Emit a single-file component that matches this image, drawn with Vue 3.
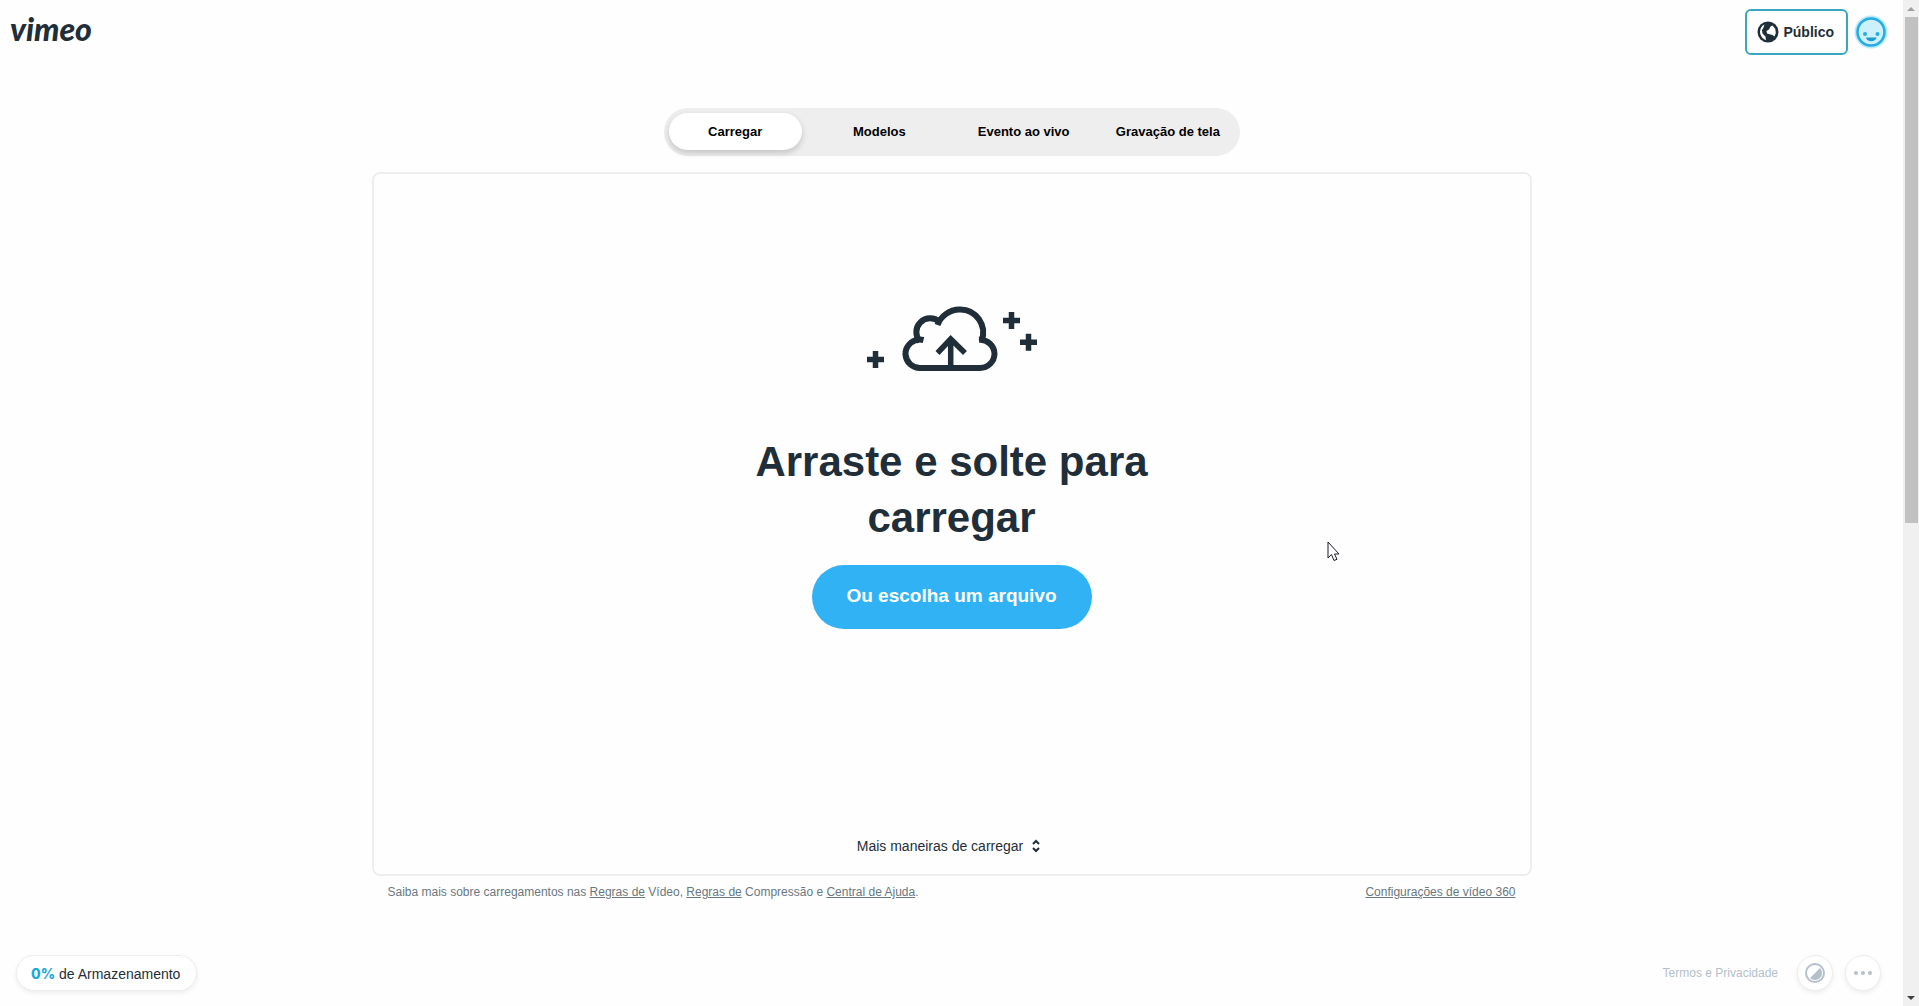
<template>
  <div class="window">
    <div class="page">
      <header class="header">
        <a href="#" class="logo">vimeo</a>
        <div class="header-actions">
          <button class="btn-privacy">
            <svg class="icon-globe" viewBox="0 0 22 22" aria-hidden="true">
              <circle cx="11" cy="11" r="10.500" fill="#1f2e38" />
              <path d="M7.500 3.500C1.500 6.500 1.500 15 7.500 18.500L9 19 8.500 15.500 5.500 12.500 5 9 6.500 6.500Z" fill="#fff" />
              <path d="M15.500 4.500 18.300 8 18.800 12 17.500 15.500 15.500 14 13.500 13.500 10 12.500 9.500 10 12 8.500 13.500 5.500Z" fill="#fff" />
            </svg>
            <span>Público</span>
          </button>
          <button class="btn-avatar" aria-label="Perfil">
            <svg viewBox="0 0 34 34" aria-hidden="true">
              <circle cx="17" cy="17" r="16.500" fill="#b5ebfb" />
              <circle cx="17" cy="17" r="13.500" fill="#cdf1fc" stroke="#27aae1" stroke-width="2.500" />
              <circle cx="11" cy="19" r="2" fill="#27aae1" />
              <circle cx="23.500" cy="19" r="2" fill="#27aae1" />
              <path d="M12 22.500h10.500c-.8 5-9.700 5-10.500 0Z" fill="#1b9ad6" />
            </svg>
          </button>
        </div>
      </header>

      <main class="main">
        <nav class="tabs">
          <button
            v-for="tab in tabs"
            :key="tab"
            class="tab"
            :class="{ active: activeTab === tab }"
            @click="activeTab = tab"
          >
            {{ tab }}
          </button>
        </nav>

        <section class="dropzone">
          <svg class="icon-upload" viewBox="16 16 172 66" aria-hidden="true">
            <g fill="none" stroke="#1f2e38" stroke-width="5.500">
              <path d="M70 78A14.500 14.500 0 0 1 55.500 64.500A14.500 14.500 0 0 1 73.500 50" stroke-width="6" />
              <path d="M70 51.500A13.800 13.800 0 0 1 89.500 32" stroke-width="6" />
              <path d="M87.500 35A24 24 0 0 1 109.500 19.500A23 23 0 0 1 131.500 51" stroke-width="6" />
              <path d="M129 49.800A14.500 14.500 0 0 1 144.500 64A14.500 14.500 0 0 1 130 78H69.500" stroke-width="6" />
              <path d="M100.700 48v30M87.500 63l13.200-14 14.300 14" />
              <path d="M17 69.500h17M25.500 61v17M153 30.500h17M161.500 22v17M170 52.300h17M178.500 43.800v17" />
            </g>
          </svg>
          <h1 class="title">Arraste e solte para carregar</h1>
          <button class="btn-choose">Ou escolha um arquivo</button>
          <button class="btn-more">
            <span>Mais maneiras de carregar</span>
            <svg viewBox="0 0 8 14" aria-hidden="true">
              <path d="M1 5l3-3 3 3M1 9l3 3 3-3" fill="none" stroke="#1f2e38" stroke-width="2" />
            </svg>
          </button>
        </section>

        <div class="notes">
          <p>
            Saiba mais sobre carregamentos nas <a href="#">Regras de</a> Vídeo,
            <a href="#">Regras de</a> Compressão e <a href="#">Central de Ajuda</a>.
          </p>
          <a href="#">Configurações de vídeo 360</a>
        </div>
      </main>

      <footer class="footer">
        <button class="btn-storage"><strong>0%</strong> de Armazenamento</button>
        <div class="footer-actions">
          <a href="#" class="terms">Termos e Privacidade</a>
          <button class="btn-round" aria-label="Tema">
            <svg viewBox="0 0 20 20" aria-hidden="true">
              <circle cx="10" cy="10" r="9" fill="none" stroke="#b4c0ca" stroke-width="2" />
              <path d="M15 5A7 7 0 0 1 5 15Z" fill="#b4c0ca" />
            </svg>
          </button>
          <button class="btn-round" aria-label="Mais">
            <svg viewBox="0 0 20 20" aria-hidden="true" fill="#b4c0ca">
              <circle cx="3" cy="10" r="2" />
              <circle cx="10" cy="10" r="2" />
              <circle cx="17" cy="10" r="2" />
            </svg>
          </button>
        </div>
      </footer>
    </div>

    <div class="scrollbar" aria-hidden="true">
      <span class="arrow up"></span>
      <div class="track"><div class="thumb"></div></div>
      <span class="arrow down"></span>
    </div>

    <svg class="cursor" viewBox="0 0 13 21" aria-hidden="true">
      <path d="M1 1v16l3.500-3.500 2.500 6 3-1.200-2.500-5.300H12Z" fill="#fff" stroke="#1c1c24" />
    </svg>
  </div>
</template>

<script setup>
import { ref } from 'vue'

const tabs = ['Carregar', 'Modelos', 'Evento ao vivo', 'Gravação de tela']
const activeTab = ref('Carregar')
</script>

<style>
body {
  margin: 0;
  background: #fefefe;
}
</style>

<style scoped>
.window {
  position: relative;
  display: flex;
  min-height: 100vh;
  color: #1f2e38;
  font-family: "Liberation Sans", Arial, sans-serif;
}

button {
  padding: 0;
  border: none;
  background: none;
  color: inherit;
  font-family: inherit;
  cursor: pointer;
}

svg {
  display: block;
}

.page {
  flex: 1;
  display: flex;
  flex-direction: column;
}

.header {
  display: flex;
  justify-content: space-between;
  align-items: center;
  height: 64px;
  padding: 0 15px 0 10px;
}

.logo {
  color: #1f2e38;
  font-family: Lato, sans-serif;
  font-size: 32px;
  font-style: italic;
  font-weight: 900;
  line-height: 36px;
  margin-bottom: 6px;
  text-decoration: none;
}

.header-actions {
  display: flex;
  align-items: center;
  gap: 6px;
}

.btn-privacy {
  display: flex;
  align-items: center;
  gap: 4px;
  height: 46px;
  padding: 0 12px 0 10px;
  border: 2px solid #3aa5c1;
  border-radius: 6px;
  background: #fff;
  font-size: 14px;
  font-weight: 700;
}

.icon-globe {
  width: 22px;
  height: 22px;
}

.btn-avatar svg {
  width: 34px;
  height: 34px;
}

.main {
  flex: 1;
  display: flex;
  flex-direction: column;
  align-items: center;
  padding: 44px 24px 0;
}

.tabs {
  display: grid;
  grid-template-columns: repeat(4, 1fr);
  gap: 11px;
  width: 100%;
  max-width: 576px;
  box-sizing: border-box;
  padding: 5px 5px 6px;
  border-radius: 24px;
  background: #eee;
}

.tab {
  height: 37px;
  border-radius: 19px;
  color: #000;
  font-size: 13px;
  font-weight: 700;
  white-space: nowrap;
}

.tab.active {
  background: #fff;
  box-shadow: 0 3px 6px rgba(0, 0, 0, 0.18);
}

.dropzone {
  flex: 1;
  display: flex;
  flex-direction: column;
  align-items: center;
  width: 100%;
  max-width: 1160px;
  box-sizing: border-box;
  margin-top: 16px;
  padding: 132px 24px 20px;
  border: 2px solid #eee;
  border-radius: 8px;
}

.icon-upload {
  width: 172px;
  height: 66px;
}

.title {
  max-width: 440px;
  margin: 62px 0 19px;
  font-size: 42px;
  line-height: 56px;
  text-align: center;
}

.btn-choose {
  width: 280px;
  height: 64px;
  padding-bottom: 2px;
  border-radius: 32px;
  background: #31b2f4;
  color: #fff;
  font-size: 19px;
  font-weight: 700;
}

.btn-more {
  display: flex;
  align-items: center;
  gap: 9px;
  margin-top: auto;
  margin-right: 6px;
  font-size: 14px;
  line-height: 16px;
}

.btn-more svg {
  width: 8px;
  height: 14px;
}

.notes {
  display: flex;
  justify-content: space-between;
  width: 100%;
  max-width: 1128px;
  padding: 8px 0;
  color: #6a7880;
  font-size: 12px;
  line-height: 16px;
}

.notes p {
  margin: 0;
}

.notes a {
  color: inherit;
}

.footer {
  display: flex;
  justify-content: space-between;
  align-items: center;
  margin-top: 47px;
  padding: 0 22px 15px 16px;
}

.btn-storage {
  height: 36px;
  padding: 0 16px 0 14px;
  border: 1px solid #eee;
  border-radius: 18px;
  background: #fff;
  box-shadow: 0 2px 5px rgba(0, 0, 0, 0.07);
  font-size: 14px;
}

.btn-storage strong {
  color: #1ba9d8;
  font-family: Inter, sans-serif;
  font-weight: 800;
}

.footer-actions {
  display: flex;
  align-items: center;
  gap: 12px;
}

.terms {
  margin-right: 7px;
  color: #b4c0ca;
  font-size: 12px;
  text-decoration: none;
}

.btn-round {
  display: flex;
  align-items: center;
  justify-content: center;
  width: 36px;
  height: 36px;
  border: 1px solid #eee;
  border-radius: 50%;
  background: #fff;
  box-shadow: 0 2px 5px rgba(0, 0, 0, 0.07);
}

.btn-round svg {
  width: 20px;
  height: 20px;
}

.scrollbar {
  display: flex;
  flex-direction: column;
  align-items: center;
  width: 16px;
  background: #f0f0f0;
}

.arrow {
  flex: none;
  width: 0;
  margin: 6px 0;
  border: 4px solid transparent;
}

.arrow.up {
  margin-top: 3px;
  border-bottom-color: #a0a0a0;
}

.arrow.down {
  margin-bottom: 2px;
  border-top-color: #404040;
}

.track {
  flex: 1;
  width: 13px;
}

.thumb {
  height: 52%;
  background: #c1c1c1;
}

.cursor {
  position: absolute;
  top: 541px;
  left: 1327px;
  width: 13px;
  height: 21px;
}
</style>
